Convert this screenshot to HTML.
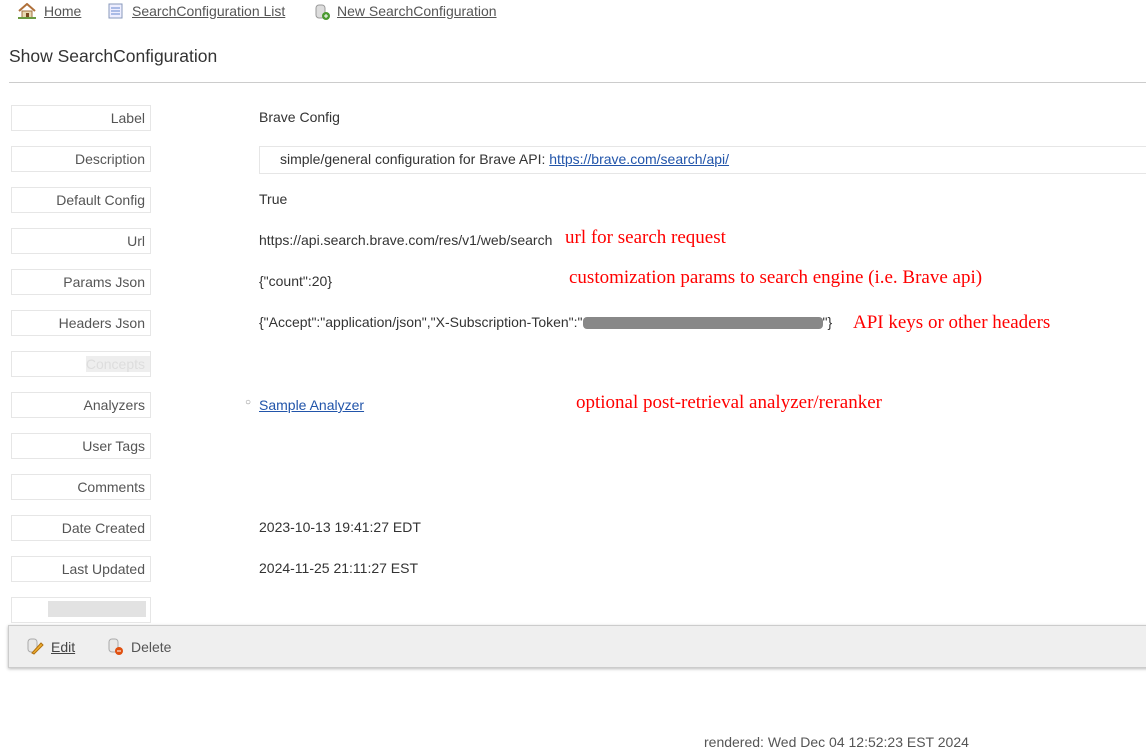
<!DOCTYPE html>
<html><head><meta charset="utf-8"><style>
body{margin:0;width:1146px;height:756px;background:#fff;font-family:"Liberation Sans",sans-serif;font-size:14px;color:#333;position:relative;overflow:hidden}
.a{position:absolute}
a{color:#333;text-decoration:underline}
.nav a{color:#555}
.lb{position:absolute;left:11px;width:138px;height:24px;border:1px solid #e6e6e6;text-align:right;line-height:24px;color:#555;padding-right:0}
.lb span{padding-right:5px}
.v{position:absolute;left:259px;line-height:24px;color:#333}
.r{position:absolute;color:#f00;font-family:"Liberation Serif",serif;font-size:19px}
</style></head><body>
<div class="a nav" style="top:3px;left:18px;font-size:14px">
<svg class="a" style="left:0;top:0" width="18" height="16"><path d="M1 8 L9 1 L17 8" fill="none" stroke="#b0703a" stroke-width="2"/><rect x="4" y="8" width="10" height="7" fill="#e8d8b0" stroke="#a07040"/><rect x="8" y="10" width="3" height="5" fill="#7a4a20"/><rect x="0" y="14" width="18" height="2" fill="#6a9a40"/></svg>
<a class="a" style="left:26px;top:0;white-space:nowrap" href="#">Home</a>
<svg class="a" style="left:90px;top:0" width="16" height="16"><rect x="1" y="1" width="13" height="14" fill="#eef" stroke="#8899bb"/><path d="M3 5h9M3 8h9M3 11h9" stroke="#6688cc"/></svg>
<a class="a" style="left:114px;top:0;white-space:nowrap" href="#">SearchConfiguration List</a>
<svg class="a" style="left:296px;top:1px" width="16" height="16"><rect x="2" y="1" width="9" height="13" rx="3" fill="#ddd" stroke="#999"/><circle cx="12" cy="12" r="4" fill="#4a9a30"/><path d="M10 12h4M12 10v4" stroke="#fff"/></svg>
<a class="a" style="left:319px;top:0;white-space:nowrap" href="#">New SearchConfiguration</a>
</div>
<div class="a" style="left:9px;top:46px;font-size:17.5px;color:#333">Show SearchConfiguration</div>
<div class="a" style="left:9px;top:82px;width:1137px;height:1px;background:#ccc"></div>

<div class="lb" style="top:105px"><span>Label</span></div>
<div class="v" style="top:105px">Brave Config</div>
<div class="lb" style="top:146px"><span>Description</span></div>
<div class="a" style="left:259px;top:146px;width:900px;height:26px;border:1px solid #e6e6e6"></div>
<div class="v" style="top:147px;left:280px">simple/general configuration for Brave API: <a href="#" style="color:#2255aa">https://brave.com/search/api/</a></div>
<div class="lb" style="top:187px"><span>Default Config</span></div>
<div class="v" style="top:187px">True</div>
<div class="lb" style="top:228px"><span>Url</span></div>
<div class="v" style="top:228px">https://api.search.brave.com/res/v1/web/search</div>
<div class="r" style="left:565px;top:227px">url for search request</div>
<div class="lb" style="top:269px"><span>Params Json</span></div>
<div class="v" style="top:269px">{"count":20}</div>
<div class="r" style="left:569px;top:267px">customization params to search engine (i.e. Brave api)</div>
<div class="lb" style="top:310px"><span>Headers Json</span></div>
<div class="v" style="top:310px">{"Accept":"application/json","X-Subscription-Token":"<span style="display:inline-block;width:240px;height:12px;background:#888;vertical-align:middle;border-radius:4px"></span>"}</div>
<div class="r" style="left:853px;top:312px">API keys or other headers</div>
<div class="lb" style="top:351px"><span style="color:#ddd;background:#eee">Concepts</span></div>
<div class="lb" style="top:392px"><span>Analyzers</span></div>
<div class="a" style="left:245px;top:397px;font-size:10px;color:#888">○</div>
<div class="v" style="top:393px"><a href="#" style="color:#2255aa">Sample Analyzer</a></div>
<div class="r" style="left:576px;top:392px">optional post-retrieval analyzer/reranker</div>
<div class="lb" style="top:433px"><span>User Tags</span></div>
<div class="lb" style="top:474px"><span>Comments</span></div>
<div class="lb" style="top:515px"><span>Date Created</span></div>
<div class="v" style="top:515px">2023-10-13 19:41:27 EDT</div>
<div class="lb" style="top:556px"><span>Last Updated</span></div>
<div class="v" style="top:556px">2024-11-25 21:11:27 EST</div>
<div class="lb" style="top:597px"><div class="a" style="left:36px;top:3px;width:98px;height:16px;background:#e2e2e2"></div></div>

<div class="a" style="left:8px;top:625px;width:1140px;height:41px;background:#efefef;border:1px solid #ccc;box-shadow:0 1px 3px #bbb"></div>
<svg class="a" style="left:26px;top:638px" width="18" height="18"><rect x="2" y="1" width="9" height="13" rx="3" fill="#e8e8e8" stroke="#aaa"/><path d="M6 15 L15 5 L17 7 L8 16 Z" fill="#f0b030" stroke="#b07010"/></svg>
<a class="a" style="left:51px;top:639px;color:#444" href="#">Edit</a>
<svg class="a" style="left:107px;top:638px" width="18" height="18"><rect x="2" y="1" width="9" height="13" rx="3" fill="#e8e8e8" stroke="#aaa"/><circle cx="12" cy="13" r="4" fill="#e05010"/><path d="M10 13h4" stroke="#fff"/></svg>
<div class="a" style="left:131px;top:639px;color:#555">Delete</div>

<div class="a" style="left:704px;top:734px;color:#555">rendered: Wed Dec 04 12:52:23 EST 2024</div>
</body></html>
